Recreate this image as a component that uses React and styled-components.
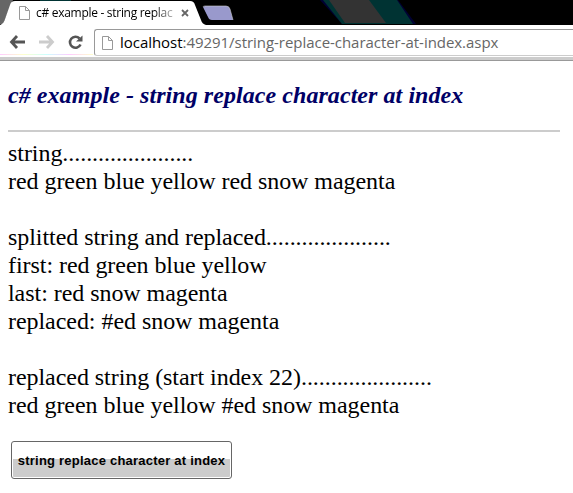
import React from 'react'
import styled, { createGlobalStyle } from 'styled-components'


const GlobalStyle = createGlobalStyle`
    body {
        margin: 0;
        background-color: #ffffff;
        overflow: hidden;
    }
`;

const Browser = styled.div`
    width: 573px;
    height: 493px;
    background-color: #ffffff;
`;

const TabStrip = styled.div`
    position: relative;
    height: 25px;
    background-color: #000000;
`;

const StripArt = styled.svg`
    position: absolute;
    top: 0;
    left: 0;
`;

const Tab = styled.div`
    position: relative;
    display: flex;
    align-items: center;
    height: 25px;
    padding-left: 19px;
`;

const TabTitle = styled.span`
    width: 137px;
    margin-left: 6px;
    white-space: nowrap;
    font: 12px/24px "Open Sans", sans-serif;
    letter-spacing: -0.29px;
    color: #000000;
    mask-image: linear-gradient(to right, #000 118px, transparent 144px);
`;

const CloseIcon = styled.svg`
    margin: 1px 0 0 8px;
`;

const Toolbar = styled.div`
    display: flex;
    height: 32px;
    padding-left: 9px;
    box-sizing: border-box;
    background: linear-gradient(to right, #ffccff, #ffffcc, #ccffff, #ffccff, #ffffcc) 0 29px / 93px 1px no-repeat #ffffff;
`;

const NavIcon = styled.svg`
    margin: 9px ${props => props.$gap}px 0 0;
`;

const AddressBar = styled.div`
    display: flex;
    align-items: center;
    flex: 1;
    height: 27px;
    margin-top: 4px;
    padding-left: 7px;
    box-sizing: border-box;
    border: 1px solid #999999;
    border-bottom-color: #cccccc;
    border-right: none;
    border-radius: 3px 0 0 3px;
    background-color: #ffffff;
`;

const Url = styled.span`
    margin: 0 0 1px 7px;
    white-space: nowrap;
    font: 15px/24px "Open Sans", sans-serif;
    letter-spacing: -0.04px;
    color: #666666;
`;

const Host = styled.span`
    color: #000000;
`;

const ToolbarEdge = styled.div`
    height: 3px;
    background-color: #cccccc;
    border-bottom: 1px solid #999999;
`;

const Page = styled.main`
    padding: 20px 13px 0 8px;
    font: 24px/28px "Liberation Serif", serif;
    color: #000000;
`;

const Heading = styled.h2`
    margin: 0 0 21px;
    font-size: 24px;
    line-height: 28px;
    font-style: italic;
    letter-spacing: 0.06px;
    color: #000066;
`;

const Divider = styled.hr`
    height: 2px;
    margin: 0 0 7px;
    border: none;
    background-color: #cccccc;
`;

const Output = styled.p`
    margin: 0 0 28px;
    letter-spacing: -0.05px;
    white-space: pre-line;
`;

const Button = styled.button`
    display: block;
    width: 221px;
    height: 38px;
    margin: -6px 0 0 3px;
    padding: 0;
    border: 1px solid #666666;
    border-radius: 3px;
    background: linear-gradient(#ffffff 17px, #cccccc 17px) padding-box;
    box-shadow: inset 0 0 0 1px #ffffff;
    font: bold 13px "Liberation Sans", sans-serif;
    letter-spacing: 0.22px;
    color: #000000;
    white-space: nowrap;
`;

const PageIcon = () => (
    <svg width="11" height="14" viewBox="0 0 11 14" fill="none" stroke="#999999">
        <path d="M.5 .5H6.5L10.5 4.5V13.5H.5ZM6.5 .5V4.5H10.5" />
    </svg>
)

const sections = [
    `string......................
    red green blue yellow red snow magenta`,
    `splitted string and replaced.....................
    first: red green blue yellow
    last: red snow magenta
    replaced: #ed snow magenta`,
    `replaced string (start index 22)......................
    red green blue yellow #ed snow magenta`
]

const App = () => {
    return (
        <Browser>
            <GlobalStyle />
            <TabStrip>
                <StripArt width="573" height="25" viewBox="0 0 573 25">
                    <path d="M0 0H13L3 24H0Z" fill="#666666" />
                    <path d="M40 0H71V1H40Z" fill="#003333" />
                    <path d="M320 0H398L416 24H342Z" fill="#000033" />
                    <path d="M323 0H397L413 24H342Z" fill="#003333" />
                    <path d="M329 0H369L386 23H345Z" fill="#333333" />
                    <path d="M0 25C3 24 4 22 5 19L10 5Q11 1 15 1H190Q194 1 195 5L201 20Q202 24 206 25Z" fill="#ffffff" />
                    <path d="M205 6H226Q229 6 230 9L233 20H212Q209 20 208 17L203 7Z" fill="#9999cc" />
                    <path d="M203 7Q203 6 205 6H226Q229 6 230 9L233 20" fill="none" stroke="#cccccc" strokeWidth=".6" />
                </StripArt>
                <Tab>
                    <PageIcon />
                    <TabTitle>c# example - string replac</TabTitle>
                    <CloseIcon width="8" height="8" viewBox="0 0 8 8">
                        <path d="M1 1L7 7M7 1L1 7" stroke="#666666" strokeWidth="1.8" />
                    </CloseIcon>
                </Tab>
            </TabStrip>
            <Toolbar>
                <NavIcon $gap={14} width="16" height="16" viewBox="0 0 16 16" fill="none" stroke="#555555" strokeWidth="2.8">
                    <path d="M8 2L2.5 8L8 14M2.5 8H16" />
                </NavIcon>
                <NavIcon $gap={12} width="16" height="16" viewBox="0 0 16 16" fill="none" stroke="#cccccc" strokeWidth="2.8">
                    <path d="M8 2L13.5 8L8 14M0 8H13.5" />
                </NavIcon>
                <NavIcon $gap={11} width="16" height="16" viewBox="0 0 16 16">
                    <path d="M12.5 4.5A5.5 5.5 0 1 0 13.5 10.5" fill="none" stroke="#555555" strokeWidth="2.6" />
                    <path d="M15.5 1.5V7.5H9Z" fill="#555555" />
                </NavIcon>
                <AddressBar>
                    <PageIcon />
                    <Url><Host>localhost</Host>:49291/string-replace-character-at-index.aspx</Url>
                </AddressBar>
            </Toolbar>
            <ToolbarEdge />
            <Page>
                <Heading>c# example - string replace character at index</Heading>
                <Divider />
                {sections.map(text => <Output key={text}>{text}</Output>)}
                <Button>string replace character at index</Button>
            </Page>
        </Browser>
    )
}

export default App
